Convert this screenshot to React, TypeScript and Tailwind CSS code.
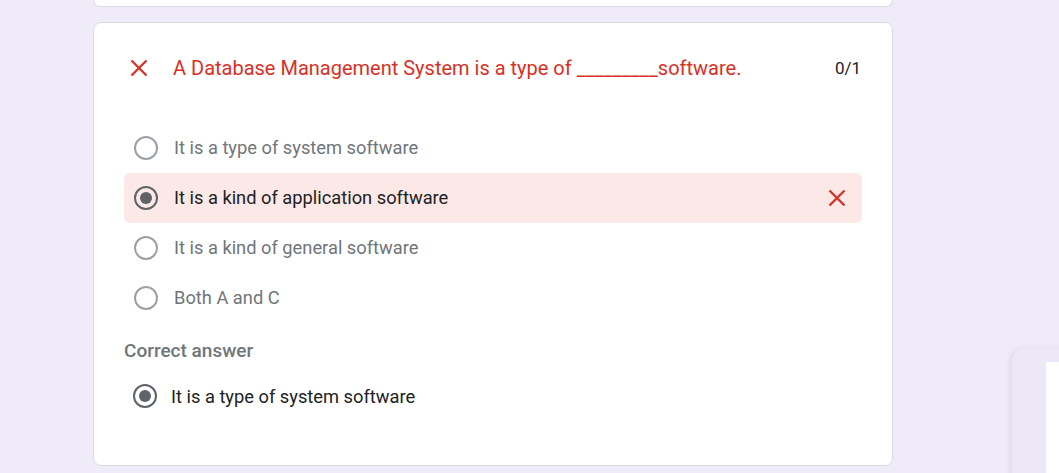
const options = [
  { label: "It is a type of system software", selected: false },
  { label: "It is a kind of application software", selected: true },
  { label: "It is a kind of general software", selected: false },
  { label: "Both A and C", selected: false },
];

function Cross({ className = "" }: { className?: string }) {
  return (
    <svg viewBox="0 0 18 18" className={`h-[18px] w-[18px] shrink-0 ${className}`} fill="none">
      <path d="M1.5 1.5L16.5 16.5M16.5 1.5L1.5 16.5" stroke="#d93025" strokeWidth="2.3" />
    </svg>
  );
}

function Radio({ checked }: { checked: boolean }) {
  return (
    <span
      className={`flex h-6 w-6 shrink-0 items-center justify-center rounded-full border-2 ${
        checked ? "border-[#5f6368]" : "border-[#9aa0a6]"
      }`}
    >
      {checked && <span className="h-3 w-3 rounded-full bg-[#5f6368]" />}
    </span>
  );
}

export default function App() {
  return (
    <div className="relative h-[473px] w-[1059px] overflow-hidden bg-[#f0ebf8] font-['Roboto',sans-serif]">
      <div className="ml-[93px] w-[800px]">
        {/* previous card, cut off at top */}
        <div className="h-[7px] rounded-b-lg border-x border-b border-[#dadce0] bg-white" />

        <div className="mt-[15px] h-[444px] rounded-lg border border-[#dadce0] bg-white px-[30px] pt-[27px]">
          {/* Question header */}
          <div className="flex h-9 items-center">
            <Cross className="ml-[6px]" />
            <span className="ml-[25px] text-[20px] text-[#d93025]">
              A Database Management System is a type of _________software.
            </span>
            <span className="ml-auto mr-[1px] mt-[1px] text-[17px] text-[#202124]">0/1</span>
          </div>

          {/* Options */}
          <div className="mt-[37px]">
            {options.map((o) => (
              <div
                key={o.label}
                className={`flex h-[50px] items-center rounded-md pl-[10px] pr-[16px] ${
                  o.selected ? "bg-[#fce8e6]" : ""
                }`}
              >
                <Radio checked={o.selected} />
                <span
                  className={`ml-[16px] mb-[1px] text-[18.3px] ${
                    o.selected ? "text-[#202124]" : "text-[#70757a]"
                  }`}
                >
                  {o.label}
                </span>
                {o.selected && <Cross className="ml-auto" />}
              </div>
            ))}
          </div>

          <div className="mt-[14px] text-[19px] font-medium text-[#70757a]">Correct answer</div>

          <div className="mt-[17px] flex items-center pl-[9px]">
            <Radio checked />
            <span className="ml-[14px] text-[18.3px] text-[#202124]">It is a type of system software</span>
          </div>
        </div>
      </div>

      {/* floating side panel, partly visible */}
      <div className="absolute left-[1012px] top-[349px] h-[140px] w-[80px] rounded-tl-xl bg-[#ede8f7] shadow-[-2px_0_6px_rgba(0,0,0,0.08)]">
        <div className="ml-[34px] mt-[13px] h-full bg-white" />
      </div>
    </div>
  );
}
